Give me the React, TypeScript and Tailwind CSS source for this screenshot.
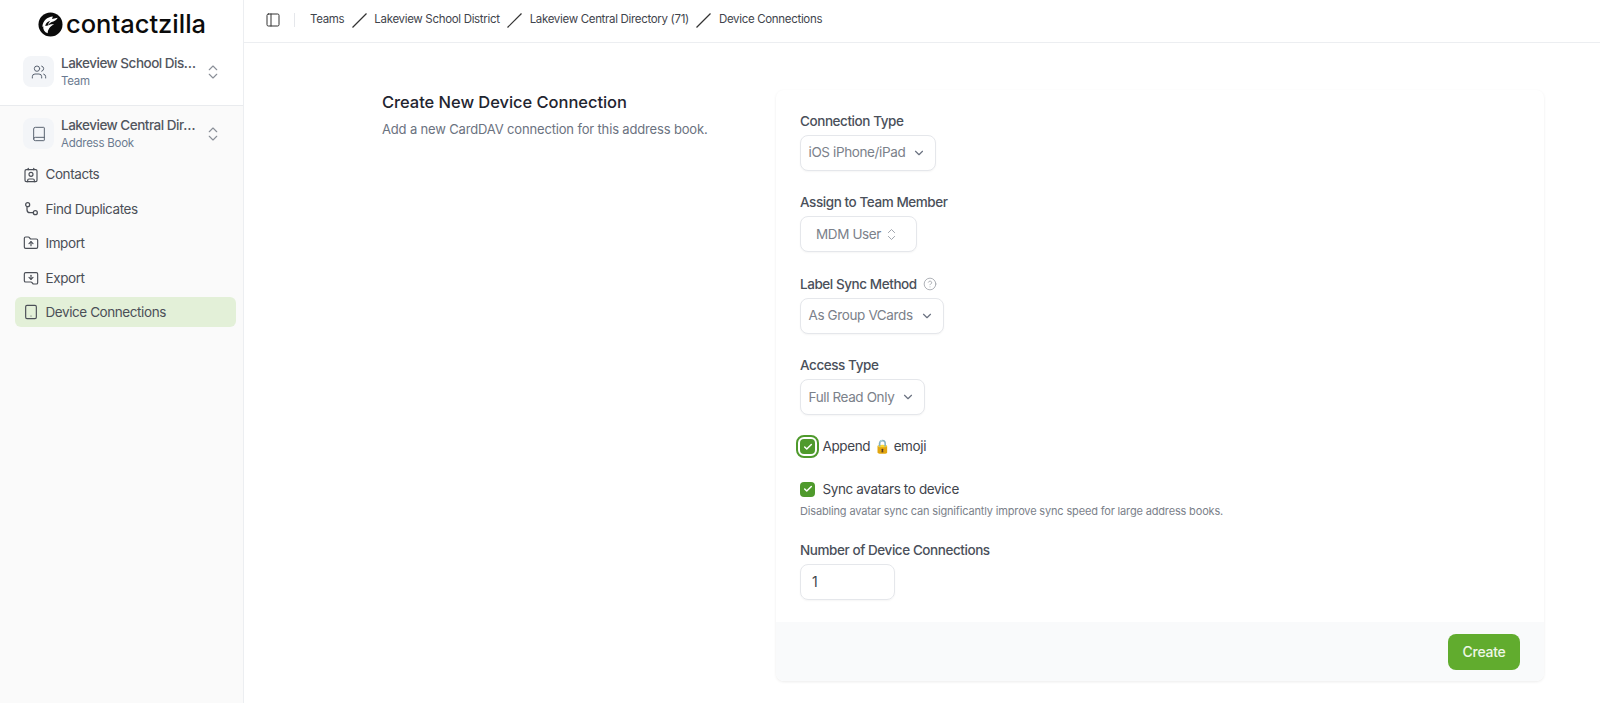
import React from "react";
import { Users, Book, ChevronsUpDown, Contact, FolderUp, Tablet, PanelLeft, ChevronDown, CircleHelp, Check } from "lucide-react";

const font = "font-['Inter','Noto_Sans',sans-serif]";

function Logo() {
  return (
    <div className="flex h-[48px] items-center justify-center gap-[3px] pl-[1px]">
      <svg viewBox="0 0 26 26" className="h-[25px] w-[25px] shrink-0">
        <circle cx="13" cy="13" r="12.5" fill="#0b0b0b" />
        <path d="M4.5 15.5C5 9.5 9.5 5 15.5 4.8l-1 2.4 6-1.2c-1 2-2.4 3.2-4.5 3.8-2.6.7-4.6 2-5.6 4.2 2-1.2 4-1.5 6.5-1.2-2.2 1-4 2.3-5.2 4.2-1 1.6-1.6 3.2-1.6 5.2-3.4-1.4-5.1-4.3-4.6-7.5z" fill="#fff" />
        <path d="M7.5 14.5c.6-2.8 2.6-4.6 5.4-5.3-1.4 1.4-2.3 3-2.6 4.8-.9.1-1.9.3-2.8.5z" fill="#0b0b0b" />
      </svg>
      <span className="text-[25.5px] font-[550] leading-none text-[#0b0b0b]">contactzilla</span>
    </div>
  );
}

function Switcher({ icon, name, sub }: { icon: React.ReactNode; name: string; sub: string }) {
  return (
    <div className="flex h-[31px] items-center pl-[23px] pr-[21px]">
      <div className="flex h-[31px] w-[31px] shrink-0 items-center justify-center rounded-lg bg-[#f3f5f8] text-[#5b6472]">{icon}</div>
      <div className="ml-[7px] w-[136px]">
        <div className="overflow-hidden text-ellipsis whitespace-nowrap text-[13.5px] font-medium leading-[18px] tracking-[-0.5px] text-[#52565e]">{name}</div>
        <div className="text-[11.5px] leading-[18px] tracking-[-0.25px] text-[#6b7a90]">{sub}</div>
      </div>
      <ChevronsUpDown className="ml-auto h-[18px] w-[18px] text-[#8a8f98]" strokeWidth={1.5} />
    </div>
  );
}

function NavItem({ icon, label, active }: { icon: React.ReactNode; label: string; active?: boolean }) {
  return (
    <div className={`flex h-[30px] items-center gap-[6.5px] rounded-md pl-[8px] text-[13.5px] tracking-[-0.42px] text-[#4b4f57] ${active ? "bg-[#e3f0d8]" : ""}`}>
      {icon}
      <span>{label}</span>
    </div>
  );
}

function Sep() {
  return (
    <svg viewBox="0 0 15 15" className="h-[15px] w-[15px] shrink-0 text-[#333]">
      <path d="M0.5 14.5L14.5 0.5" stroke="currentColor" strokeWidth="1.2" />
    </svg>
  );
}

function Field({ label, help, children }: { label: string; help?: boolean; children: React.ReactNode }) {
  return (
    <div>
      <div className="flex h-[20px] items-center gap-[6px] text-[13.5px] font-medium tracking-[-0.43px] text-[#4a505a]">
        {label}
        {help && <CircleHelp className="h-[14px] w-[14px] text-[#a3a7ae]" strokeWidth={1.5} />}
      </div>
      <div className="mt-[3.5px]">{children}</div>
    </div>
  );
}

function Select({ value, width, updown }: { value: string; width: string; updown?: boolean }) {
  return (
    <div className={`flex h-[36px] items-center rounded-lg border border-[#e5e7eb] bg-white text-[13.5px] tracking-[-0.38px] text-[#7b818a] shadow-[0_1px_2px_rgba(0,0,0,0.04)] ${width} ${updown ? "pl-[15px]" : "pl-[7.5px]"}`}>
      <span>{value}</span>
      {updown ? (
        <ChevronsUpDown className="ml-auto mr-[17px] h-[15px] w-[15px] text-[#9a9fa7]" strokeWidth={1.5} />
      ) : (
        <ChevronDown className="ml-auto mr-[9px] h-[14px] w-[14px] text-[#6b7280]" strokeWidth={2} />
      )}
    </div>
  );
}

function Checkbox({ ring }: { ring?: boolean }) {
  return (
    <span className={`flex h-[15px] w-[15px] shrink-0 items-center justify-center rounded-[4px] bg-[#4f9a2c] ${ring ? "ring-2 ring-white outline-2 outline-offset-2 outline-[#4f9a2c]" : ""}`}>
      <Check className="h-[10px] w-[10px] text-white" strokeWidth={3.5} />
    </span>
  );
}

export default function App() {
  const ic = "h-[16px] w-[16px] shrink-0 text-[#4b4f57]";
  return (
    <div className={`flex h-[703px] w-[1600px] overflow-hidden bg-white ${font}`}>
      <aside className="flex w-[244px] shrink-0 flex-col border-r border-[#eceef1] bg-[#fafafa]">
        <div className="h-[106px] border-b border-[#e9ebee] bg-white">
          <Logo />
          <div className="mt-[8px]">
            <Switcher icon={<Users className="h-[16px] w-[16px]" strokeWidth={1.5} />} name="Lakeview School District" sub="Team" />
          </div>
        </div>
        <div className="mt-[12px]">
          <Switcher icon={<Book className="h-[16px] w-[16px]" strokeWidth={1.5} />} name="Lakeview Central Directory" sub="Address Book" />
        </div>
        <nav className="mt-[10.5px] flex flex-col gap-[4.4px] pl-[15px] pr-[7px]">
          <NavItem icon={<Contact className={ic} strokeWidth={1.75} />} label="Contacts" />
          <NavItem
            icon={
              <svg viewBox="0 0 24 24" className={ic} fill="none" stroke="currentColor" strokeWidth={1.9} strokeLinecap="round">
                <circle cx="7" cy="5.5" r="3" />
                <path d="M6 8.5v4.5c0 2.5 2 4.5 4.5 4.5H15" />
                <circle cx="18.5" cy="17.5" r="3" />
              </svg>
            }
            label="Find Duplicates"
          />
          <NavItem icon={<FolderUp className={ic} strokeWidth={1.75} />} label="Import" />
          <NavItem icon={<FolderUp className={`${ic} rotate-180`} strokeWidth={1.75} />} label="Export" />
          <NavItem icon={<Tablet className={ic} strokeWidth={1.75} />} label="Device Connections" active />
        </nav>
      </aside>
      <main className="flex min-w-0 flex-1 flex-col">
        <header className="flex h-[43px] shrink-0 items-center border-b border-[#eceef1] pb-[2px] pl-[21px] text-[11.5px] tracking-[-0.32px] text-[#3f444c]">
          <PanelLeft className="h-[16px] w-[16px] text-[#333]" strokeWidth={1.5} />
          <div className="ml-[13px] mr-[15px] h-[14px] w-px bg-[#e5e7eb]" />
          <div className="flex items-center gap-[7.5px]">
            <span>Teams</span>
            <Sep />
            <span>Lakeview School District</span>
            <Sep />
            <span>Lakeview Central Directory (71)</span>
            <Sep />
            <span>Device Connections</span>
          </div>
        </header>
        <div className="flex flex-1 pl-[138px] pt-[47px]">
          <div className="w-[394px] shrink-0">
            <h1 className="text-[16.5px] font-[450] leading-[24px] tracking-[-0.05px] text-[#1f2530]">Create New Device Connection</h1>
            <p className="mt-[5px] text-[13px] leading-[20px] tracking-[-0.16px] text-[#6b7280]">Add a new CardDAV connection for this address book.</p>
          </div>
          <div className="h-[591px] w-[768px] overflow-hidden rounded-lg bg-white shadow-[0_1px_3px_rgba(0,0,0,0.08)]">
            <div className="flex h-[532px] flex-col px-[24px] pt-[21px]">
              <div className="flex flex-col gap-[22px]">
                <Field label="Connection Type"><Select value="iOS iPhone/iPad" width="w-[136px]" /></Field>
                <Field label="Assign to Team Member"><Select value="MDM User" width="w-[117px]" updown /></Field>
                <Field label="Label Sync Method" help><Select value="As Group VCards" width="w-[144px]" /></Field>
                <Field label="Access Type"><Select value="Full Read Only" width="w-[125px]" /></Field>
              </div>
              <div className="mt-[21.5px] flex h-[20px] items-center gap-[7.5px] text-[13.5px] tracking-[-0.38px] text-[#3f444c]">
                <Checkbox ring />
                <span>Append 🔒 emoji</span>
              </div>
              <div className="mt-[22.5px] flex h-[20px] items-center gap-[7.5px] text-[13.5px] tracking-[-0.38px] text-[#3f444c]">
                <Checkbox />
                <span>Sync avatars to device</span>
              </div>
              <p className="mt-[2px] text-[11px] leading-[20px] tracking-[-0.16px] text-[#7b818a]">Disabling avatar sync can significantly improve sync speed for large address books.</p>
              <div className="mt-[19px]">
                <Field label="Number of Device Connections">
                  <div className="flex h-[36px] w-[95px] items-center rounded-lg border border-[#e5e7eb] pl-[11px] text-[14px] text-[#3f444c] shadow-[0_1px_2px_rgba(0,0,0,0.04)]">1</div>
                </Field>
              </div>
            </div>
            <div className="flex h-[59px] items-center justify-end bg-[#f9fafb] pr-[24px]">
              <button className="h-[36px] w-[72px] rounded-lg bg-[#61ac2e] text-[14px] font-medium tracking-[-0.3px] text-[#eef7e6]">Create</button>
            </div>
          </div>
        </div>
      </main>
    </div>
  );
}
